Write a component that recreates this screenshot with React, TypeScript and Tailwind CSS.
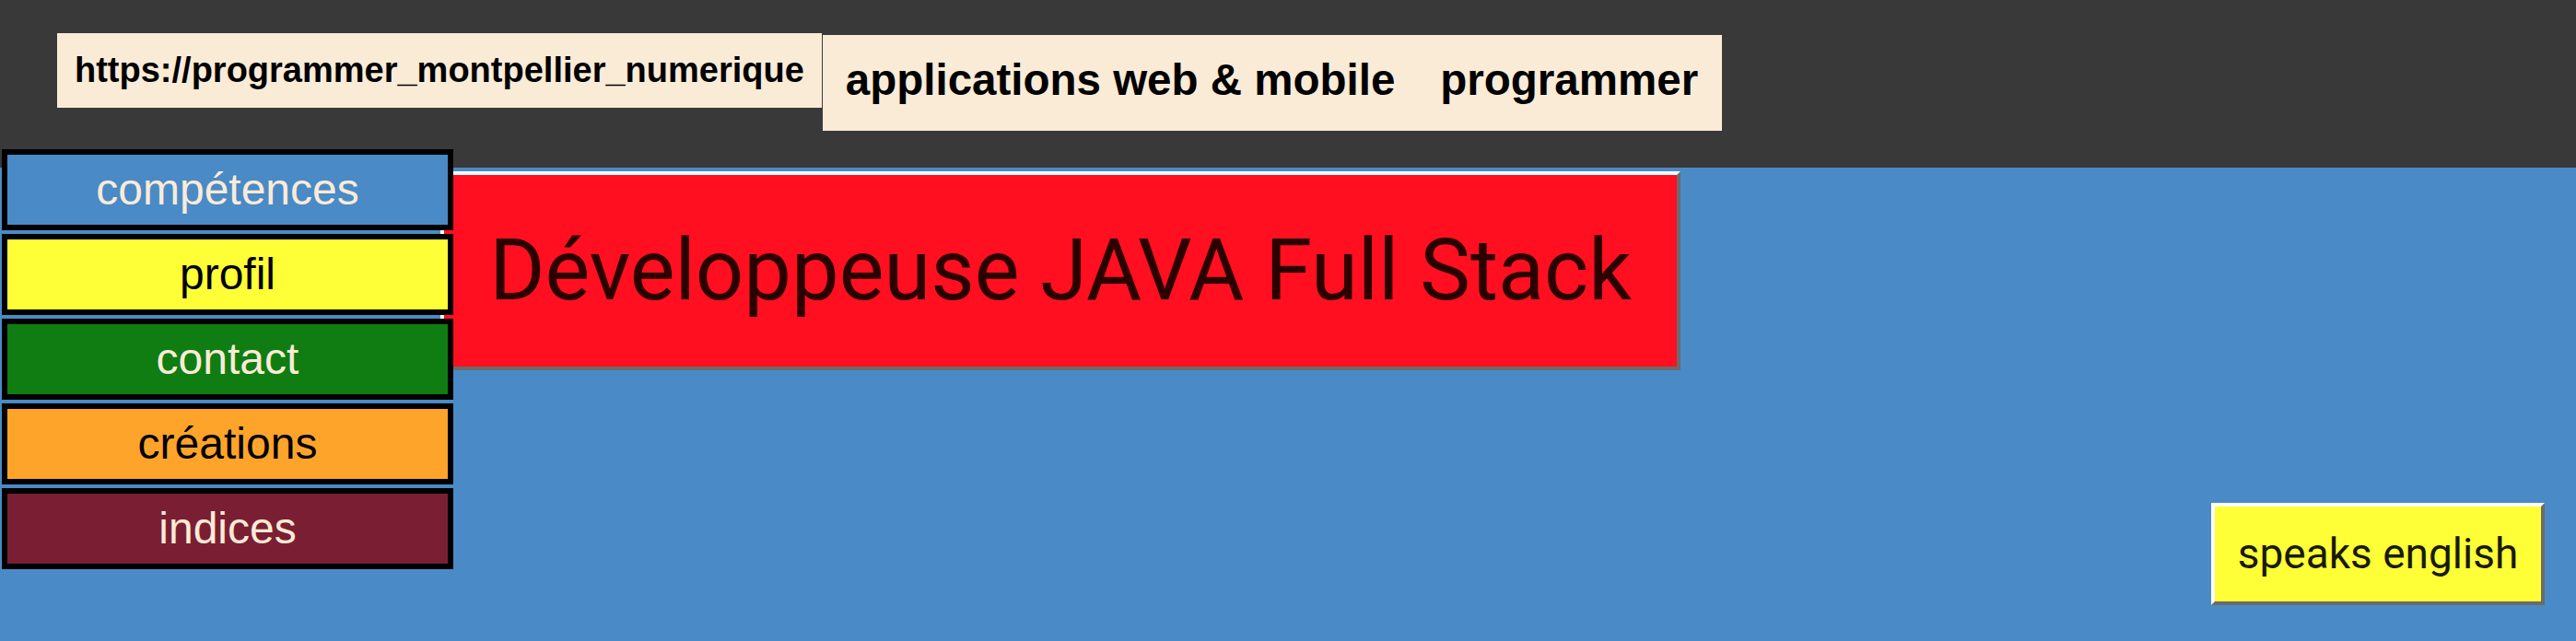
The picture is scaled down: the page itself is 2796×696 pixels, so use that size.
import React from "react";

const navItems = [
  { label: "compétences", bg: "bg-[#4a8ac6]", text: "text-[#faebd7]" },
  { label: "profil", bg: "bg-[#ffff38]", text: "text-black" },
  { label: "contact", bg: "bg-[#0f7d12]", text: "text-[#faebd7]" },
  { label: "créations", bg: "bg-[#ffa42a]", text: "text-black" },
  { label: "indices", bg: "bg-[#7a1f33]", text: "text-[#faebd7]" },
];

export default function App(): React.JSX.Element {
  return (
    <div className="flex flex-col h-[696px] w-full bg-[#4a8ac6] font-['Liberation_Sans',Arial,sans-serif]">
      {/* bandeau du haut */}
      <header className="flex items-start h-[182px] shrink-0 bg-[#393939] pl-[62px] pt-[36px]">
        <div className="flex items-center h-[81px] px-[19px] bg-[#faebd7] text-black font-bold text-[38px] whitespace-nowrap">
          https://programmer_montpellier_numerique
        </div>
        <div className="flex items-center gap-[49px] h-[104px] mt-[2px] ml-[1px] pl-[25px] pr-[26px] pb-[6px] bg-[#faebd7] text-black font-bold text-[47.5px] whitespace-nowrap">
          <span>applications web &amp; mobile</span>
          <span>programmer</span>
        </div>
      </header>

      <main className="flex items-start flex-1">
        <nav className="relative z-10 flex flex-col gap-[4px] w-[490px] ml-[2px] -mt-[20px]">
          {navItems.map((item) => (
            <a
              key={item.label}
              href="#"
              className={`flex items-center justify-center h-[88px] border-[6px] border-black text-[48px] ${item.bg} ${item.text}`}
            >
              {item.label}
            </a>
          ))}
        </nav>

        <div className="flex items-center justify-center w-[1346px] h-[216px] -ml-[14px] mt-[4px] bg-[#ff0f1f] border-4 border-t-white border-l-white border-b-[#6b6b6b] border-r-[#6b6b6b]">
          <h1 className="font-['Roboto',sans-serif] text-[92px] leading-none text-[#2a0000] whitespace-nowrap">
            Développeuse JAVA Full Stack
          </h1>
        </div>

        <button className="flex items-center justify-center w-[362px] h-[111px] ml-auto mr-[34px] mt-[364px] bg-[#ffff38] border-4 border-t-white border-l-white border-b-[#6b6b6b] border-r-[#6b6b6b] font-['Roboto',sans-serif] text-[46px] text-[#1a1a00]">
          speaks english
        </button>
      </main>
    </div>
  );
}
